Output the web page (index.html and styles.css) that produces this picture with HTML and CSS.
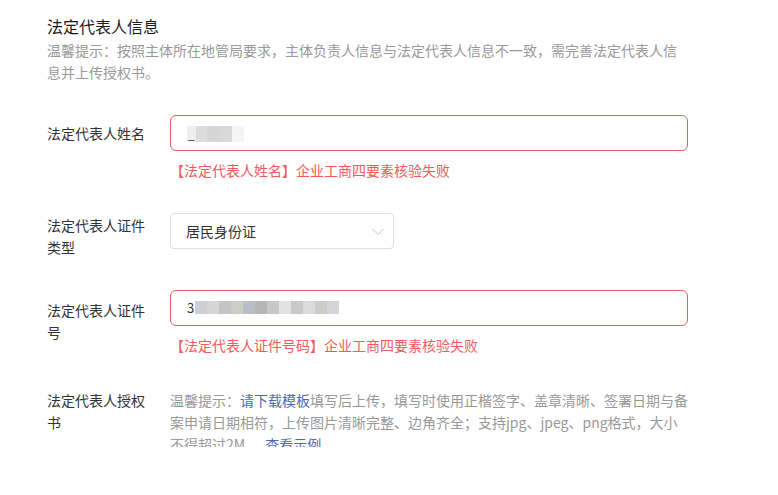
FILE: index.html
```html
<!DOCTYPE html>
<html lang="zh-CN">
<head>
<meta charset="utf-8">
<title>法定代表人信息</title>
<link rel="stylesheet" href="styles.css">
</head>
<body>
<div class="page">
  <div class="section">
    <h2 class="section-title">法定代表人信息</h2>
    <p class="section-hint">温馨提示：按照主体所在地管局要求，主体负责人信息与法定代表人信息不一致，需完善法定代表人信息并上传授权书。</p>

    <div class="form-row form-row--first">
      <div class="form-label form-label--name">法定代表人姓名</div>
      <div class="form-control">
        <div class="input input--error">
          <span class="mosaic mosaic--name"><span class="mosaic-char">_</span><span></span><span></span><span></span><span></span></span>
        </div>
        <div class="form-error">【法定代表人姓名】企业工商四要素核验失败</div>
      </div>
    </div>

    <div class="form-row">
      <div class="form-label form-label--type">法定代表人证件类型</div>
      <div class="form-control">
        <div class="select">
          <span class="select-value">居民身份证</span>
          <svg class="select-arrow" width="12" height="8" viewBox="0 0 12 8"><polyline points="0.5,1 6,6.5 11.5,1" fill="none" stroke="#c0c4cc" stroke-width="1"/></svg>
        </div>
      </div>
    </div>

    <div class="form-row">
      <div class="form-label form-label--id">法定代表人证件号</div>
      <div class="form-control">
        <div class="input input--error">
          <span class="mosaic mosaic--id"><span class="mosaic-char">3</span><span></span><span></span><span></span><span></span><span></span><span></span><span></span><span></span><span></span><span></span><span></span><span></span></span>
        </div>
        <div class="form-error">【法定代表人证件号码】企业工商四要素核验失败</div>
      </div>
    </div>

    <div class="form-row form-row--auth">
      <div class="form-label">法定代表人授权书</div>
      <div class="form-control">
        <p class="auth-hint">温馨提示：<a class="link" href="#">请下载模板</a>填写后上传，填写时使用正楷签字、盖章清晰、签署日期与备案申请日期相符，上传图片清晰完整、边角齐全；支持jpg、jpeg、png格式，大小不得超过2M，<a class="link link--example" href="#">查看示例</a></p>
      </div>
    </div>
  </div>
</div>
</body>
</html>
```

FILE: styles.css
```css
* { box-sizing: border-box; }

html, body {
  margin: 0;
  padding: 0;
  background: #fff;
}

body {
  font-family: "Noto Sans CJK SC", "Noto Sans", sans-serif;
  font-size: 14px;
  color: #333;
}

.page {
  height: 447px;
  overflow: hidden;
  padding: 14px 0 0 47px;
}

.section {
  width: 641px;
}

.section-title {
  margin: 0;
  font-size: 16px;
  line-height: 25px;
  font-weight: normal;
  color: #1a1a1a;
}

.section-hint {
  margin: 0;
  font-size: 14px;
  line-height: 22px;
  color: #999;
}

.form-row {
  display: flex;
  align-items: flex-start;
  margin-top: 32px;
}

.form-row--auth {
  margin-top: 33px;
}

.form-label {
  flex: none;
  width: 123px;
  padding-right: 23px;
  line-height: 22px;
  color: #333;
}

.form-label--name { padding-top: 7px; }
.form-label--type { padding-top: 1px; }
.form-label--id { padding-top: 9px; }

.form-control {
  flex: 1;
  min-width: 0;
}

.input {
  height: 36px;
  border: 1px solid #dcdfe6;
  border-radius: 6px;
  display: flex;
  align-items: center;
  padding-left: 16px;
}

.input--error {
  border-color: #f25a5c;
}

.form-error {
  margin-top: 8px;
  line-height: 22px;
  color: #f25a5c;
}

.select {
  width: 224px;
  height: 36px;
  border: 1px solid #dcdfe6;
  border-radius: 4px;
  display: flex;
  align-items: center;
  justify-content: space-between;
  padding: 0 9px 0 15px;
}

.select-value {
  color: #333;
  line-height: 22px;
}

.select-arrow {
  display: block;
  margin-top: 1px;
}

.mosaic {
  display: flex;
  align-items: flex-start;
}

.mosaic > span {
  display: block;
}

.mosaic--name {
  height: 16px;
  margin-top: 1px;
}

.mosaic--name .mosaic-char {
  padding: 0 1px;
  height: 16px;
  background: #eeeeee;
  color: #333;
  font-size: 12px;
  line-height: 15px;
}
.mosaic--name > span:nth-child(2) { width: 11px; height: 16px; background: #dcdcdc; }
.mosaic--name > span:nth-child(3) { width: 13px; height: 16px; background: #d6d6d6; }
.mosaic--name > span:nth-child(4) { width: 12px; height: 16px; background: #d9d9d9; }
.mosaic--name > span:nth-child(5) { width: 12px; height: 16px; background: #f4f5f7; }

.mosaic--id {
  height: 16px;
}

.mosaic--id .mosaic-char {
  height: 16px;
  padding-right: 1px;
  color: #333;
  font-size: 13px;
  line-height: 16px;
}
.mosaic--id > span + span { width: 12px; height: 13px; margin-top: 1px; }
.mosaic--id > span:nth-child(2) { background: #ccd0d4; }
.mosaic--id > span:nth-child(3) { background: #d6d6d6; }
.mosaic--id > span:nth-child(4) { background: #c3c4c6; }
.mosaic--id > span:nth-child(5) { background: #cfcbc6; }
.mosaic--id > span:nth-child(6) { background: #b9bec6; }
.mosaic--id > span:nth-child(7) { background: #b8b6b3; }
.mosaic--id > span:nth-child(8) { background: #c6c8ca; }
.mosaic--id > span:nth-child(9) { background: #e2e2e0; }
.mosaic--id > span:nth-child(10) { background: #c9c9c7; }
.mosaic--id > span:nth-child(11) { background: #d9dbde; }
.mosaic--id > span:nth-child(12) { background: #ceccc8; }
.mosaic--id > span:nth-child(13) { background: #d2d6d9; }

.auth-hint {
  margin: 0;
  width: 518px;
  line-height: 22px;
  color: #999;
}

.link {
  color: #4e68b8;
  text-decoration: none;
}

.link--example {
  margin-left: 6px;
}
```
